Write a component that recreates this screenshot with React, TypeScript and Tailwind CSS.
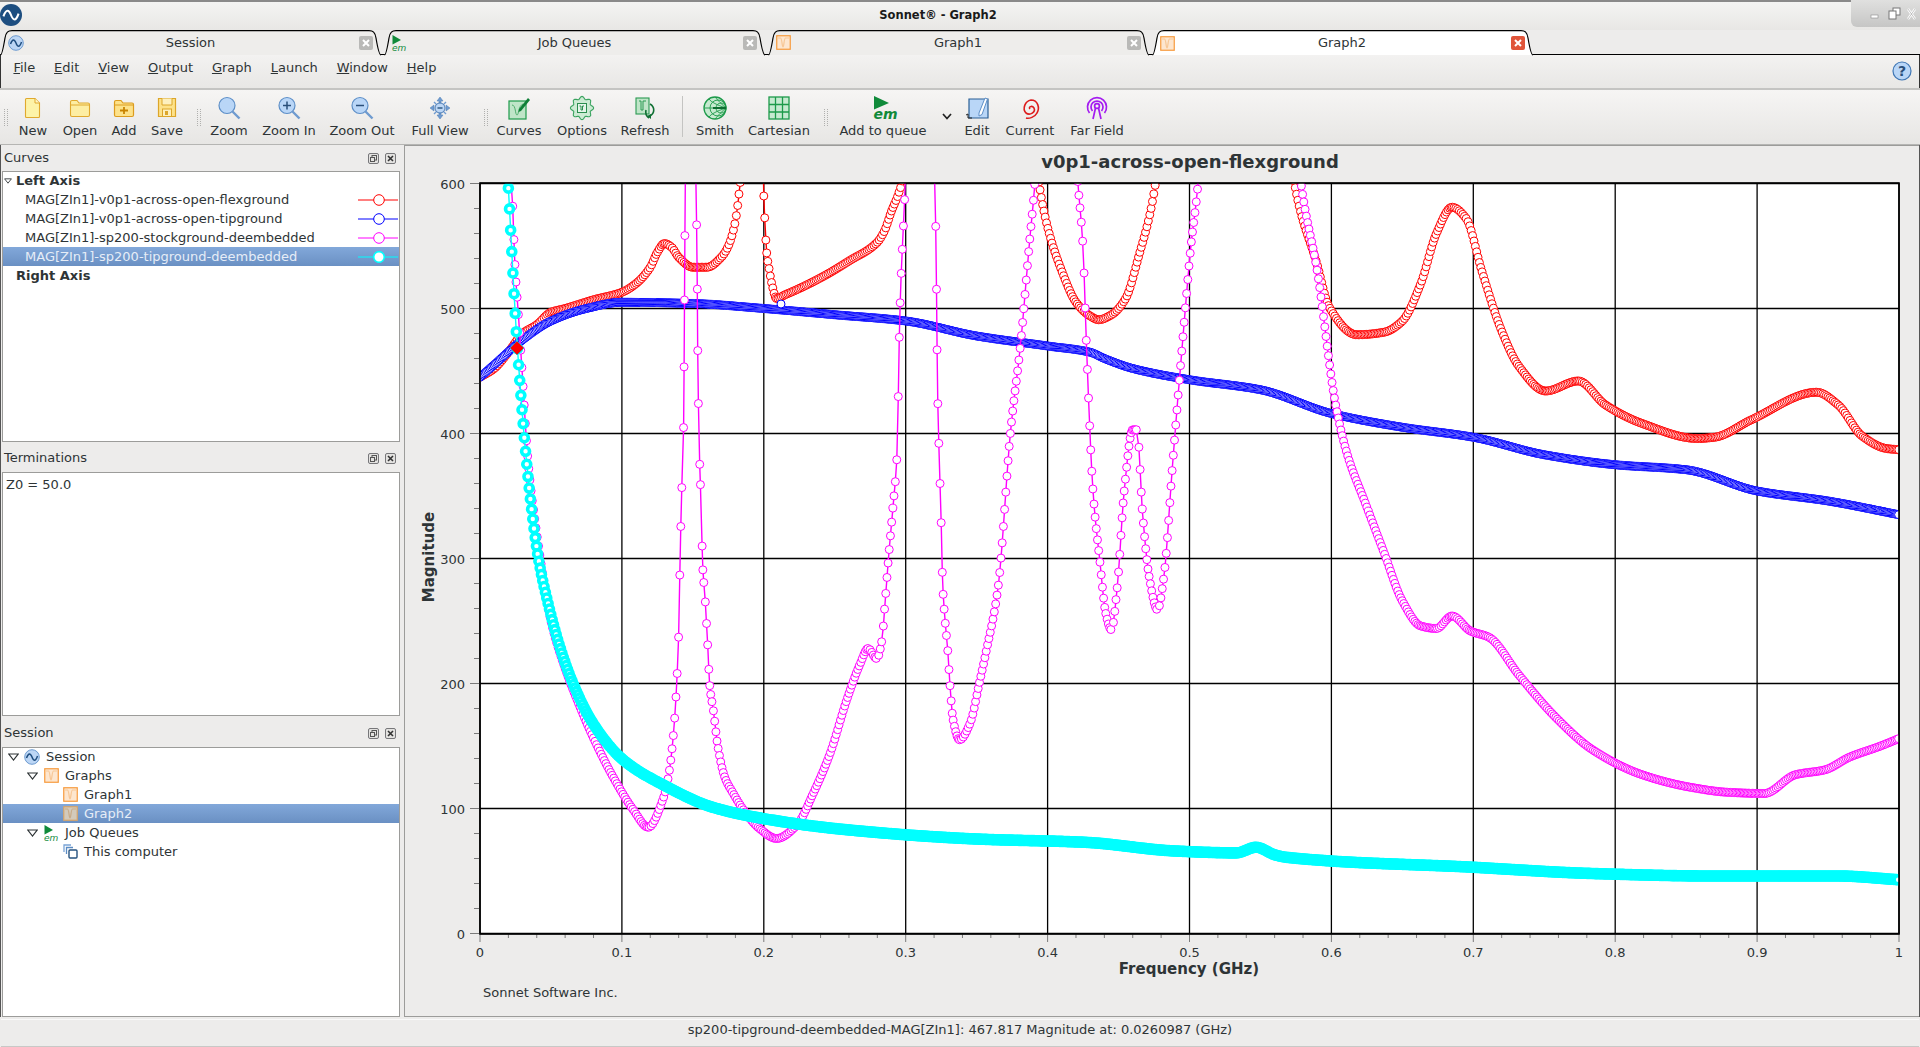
import React, { useMemo } from "react";

type P = [number, number];
const X = (f: number) => 480 + f * 1419;
const Y = (v: number) => 933.5 - v * 1.25;

function monotone(pts: P[], k0: number): P[] {
  const n = pts.length;
  const d: number[] = [];
  for (let i = 0; i < n - 1; i++) d.push((pts[i + 1][1] - pts[i][1]) / (pts[i + 1][0] - pts[i][0]));
  const m: number[] = [d[0]];
  for (let i = 1; i < n - 1; i++) {
    if (d[i - 1] * d[i] <= 0) m.push(0);
    else {
      const h0 = pts[i][0] - pts[i - 1][0];
      const h1 = pts[i + 1][0] - pts[i][0];
      const w1 = 2 * h1 + h0;
      const w2 = h1 + 2 * h0;
      m.push((w1 + w2) / (w1 / d[i - 1] + w2 / d[i]));
    }
  }
  m.push(d[n - 2]);
  const out: P[] = [];
  let k = 0;
  let last: P | null = null;
  let acc = 0;
  const fine = 0.00005;
  for (let f = pts[0][0]; f <= 1.00001; f += fine) {
    while (k < n - 2 && f > pts[k + 1][0]) k++;
    const h = pts[k + 1][0] - pts[k][0];
    const t = (f - pts[k][0]) / h;
    const t2 = t * t;
    const t3 = t2 * t;
    const v =
      (2 * t3 - 3 * t2 + 1) * pts[k][1] +
      (t3 - 2 * t2 + t) * h * m[k] +
      (-2 * t3 + 3 * t2) * pts[k + 1][1] +
      (t3 - t2) * h * m[k + 1];
    const p: P = [X(f), Y(v)];
    if (!last) {
      out.push(p);
      last = p;
      continue;
    }
    const dx = p[0] - last[0];
    const dy = p[1] - last[1];
    acc += Math.hypot(dx, dy);
    const s = Math.abs(dy / dx);
    const space = Math.min(60, k0 * (1.3 + 1.05 * s));
    last = p;
    if (acc >= space) {
      out.push(p);
      acc = 0;
    }
  }
  return out;
}

const RED: P[] = [[0,445],[.01,452],[.02,465],[.03,480],[.04,487],[.05,497],[.06,500],[.08,507],[.1,513],[.11,520],[.12,533],[.125,545],[.13,552],[.135,549],[.14,541],[.15,533],[.16,533],[.17,541],[.175,550],[.18,570],[.183,597],[.185,625],[.187,720],[.196,720],[.199,650],[.2,590],[.201,565],[.202,545],[.204,530],[.206,518],[.209,508],[.215,511],[.225,516],[.244,527],[.26,538],[.28,553],[.285,562],[.29,578],[.295,592],[.298,605],[.3,640],[.32,720],[.38,720],[.39,640],[.394,600],[.4,565],[.41,530],[.42,505],[.43,494],[.436,491],[.445,495],[.455,508],[.465,545],[.472,575],[.476,600],[.48,640],[.5,720],[.56,720],[.57,640],[.574,600],[.59,535],[.5985,501],[.618,479],[.637,481],[.65,490],[.663,520],[.674,560],[.685,581],[.695,572],[.706,530],[.72,482],[.732,454],[.751,434],[.774,442],[.793,423],[.819,408],[.858,396],[.87,397],[.896,411],[.942,433],[.957,423],[.974,398],[.991,388],[1,387]];
const BLUE: P[] = [[0,445],[.01,455],[.03,475],[.05,490],[.075,500],[.1,505],[.15,504],[.2,500],[.25,495],[.3,490],[.35,478],[.4,470],[.43,465],[.44,460],[.46,452],[.5,443],[.55,435],[.6,416],[.65,405],[.7,397],[.75,383],[.8,375],[.85,371],[.9,354],[.95,346],[1,335]];
const MAGENTA: P[] = [[.02,620],[.0225,594],[.0247,533],[.027,496],[.0296,451],[.034,376],[.04,320],[.05,250],[.06,212],[.0684,187],[.0797,157],[.0939,125],[.108,99],[.1186,85],[.1291,108],[.1327,125],[.1363,159],[.1386,200],[.1402,247],[.1409,293],[.1421,353],[.1433,393],[.1445,573],[.1455,700],[.148,760],[.1505,700],[.1522,600],[.153,535],[.1537,436],[.1545,398],[.155,368],[.1562,341],[.1567,300],[.1586,269],[.1604,232],[.162,197],[.1644,179],[.1677,149],[.1725,125],[.1785,112],[.1856,99],[.197,84],[.209,76],[.2235,87],[.2348,112],[.2467,144],[.2585,187],[.268,216],[.2735,228],[.2796,220],[.2833,235],[.2854,264],[.2875,295],[.291,341],[.2937,379],[.296,501],[.2997,600],[.302,680],[.31,740],[.318,680],[.32,620],[.3211,569],[.3218,505],[.3223,446],[.3242,360],[.3253,316],[.326,281],[.3277,251],[.3296,227],[.3312,199],[.3334,171],[.338,155],[.3453,168],[.3524,203],[.3566,225],[.365,276],[.374,403],[.381,472],[.387,550],[.391,600],[.395,680],[.405,740],[.417,680],[.4214,600],[.4249,550],[.4275,467],[.432,354],[.437,296],[.441,256],[.445,243],[.449,276],[.454,354],[.46,403],[.463,403],[.467,335],[.4715,286],[.4775,259],[.482,286],[.488,374],[.495,472],[.501,550],[.506,600],[.51,680],[.54,740],[.572,680],[.5786,600],[.59,530],[.603,423],[.611,384],[.624,344],[.637,305],[.65,266],[.663,246],[.674,244],[.685,254],[.698,242],[.711,237],[.732,207],[.758,173],[.784,147],[.819,127],[.853,117],[.879,113],[.905,112],[.927,127],[.948,131],[.965,141],[.987,150],[1,156]];
const CYAN: P[] = [[.016,680],[.0204,588],[.0258,478],[.0329,376],[.0364,339],[.041,301],[.048,264],[.0564,229],[.0656,200],[.0797,168],[.1008,139],[.129,119],[.164,101],[.1994,92],[.2586,83],[.352,75.5],[.426,73],[.49,66],[.533,64.5],[.547,69],[.56,63],[.568,61],[.7,53],[.784,48],[.87,46],[.957,46],[1,43]];

function Curve({ data, color, r = 4, sw = 1, k = 1 }: { data: P[]; color: string; r?: number; sw?: number; k?: number }) {
  const pts = useMemo(() => monotone(data, k), [data, k]);
  const visible = pts.filter((p) => p[1] > 170);
  return (
    <g>
      <polyline points={pts.map((p) => `${p[0].toFixed(1)},${p[1].toFixed(1)}`).join(" ")} fill="none" stroke={color} strokeWidth={1.4} />
      {visible.map((p, i) => (
        <circle key={i} cx={p[0]} cy={p[1]} r={r} fill="#fff" stroke={color} strokeWidth={sw} />
      ))}
    </g>
  );
}

function Chart() {
  const yMajor = [0, 100, 200, 300, 400, 500, 600];
  const xMajor = [0, 0.1, 0.2, 0.3, 0.4, 0.5, 0.6, 0.7, 0.8, 0.9, 1];
  const yTicks = Array.from({ length: 31 }, (_, i) => i * 20);
  const xTicks = Array.from({ length: 51 }, (_, i) => i * 0.02);
  const txt = { fontFamily: "'DejaVu Sans',sans-serif", fill: "#2e3436" };
  return (
    <svg viewBox="405 146 1514 870" className="block w-[1514px] h-[870px]">
      <text x="1190" y="168" textAnchor="middle" fontSize="18" fontWeight="700" style={txt}>v0p1-across-open-flexground</text>
      <rect x="480" y="183" width="1419" height="751" fill="#fff" />
      <clipPath id="plot"><rect x="480" y="183" width="1419" height="751" /></clipPath>
      <g stroke="#000" strokeWidth="1.3">
        {yMajor.map((v) => <line key={v} x1="480" x2="1899" y1={Y(v)} y2={Y(v)} />)}
        {xMajor.map((f) => <line key={f} x1={X(f)} x2={X(f)} y1="183" y2="934" />)}
      </g>
      <g stroke="#7a7a7a" strokeWidth="1">
        {yTicks.map((v) => <line key={v} x1={v % 100 === 0 ? 470 : 474} x2="480" y1={Y(v)} y2={Y(v)} />)}
        {xTicks.map((f, i) => <line key={i} x1={X(f)} x2={X(f)} y1="934" y2={i % 5 === 0 ? 942 : 938} />)}
      </g>
      <g clipPath="url(#plot)">
        <Curve data={RED} color="#ff0000" />
        <Curve data={BLUE} color="#0000ff" k={0.75} />
        <circle cx="781" cy="304" r="4" fill="#fff" stroke="#0000ff" />
        <Curve data={MAGENTA} color="#ff00ff" />
        <Curve data={CYAN} color="#00ffff" r={4} sw={3.6} />
        <path d="M517 341 L524 348 L517 355 L510 348 Z" fill="#ff0000" stroke="#00cccc" strokeWidth="0.6" />
      </g>
      <rect x="480" y="183" width="1419" height="751" fill="none" stroke="#000" strokeWidth="1.6" />
      {yMajor.map((v) => <text key={v} x="465" y={Y(v) + 5} textAnchor="end" fontSize="13" style={txt}>{v}</text>)}
      {xMajor.map((f) => <text key={f} x={X(f)} y="957" textAnchor="middle" fontSize="13" style={txt}>{f}</text>)}
      <text x="1189" y="974" textAnchor="middle" fontSize="15" fontWeight="700" style={txt}>Frequency (GHz)</text>
      <text transform="translate(434 557) rotate(-90)" textAnchor="middle" fontSize="15" fontWeight="700" style={txt}>Magnitude</text>
      <text x="483" y="997" fontSize="13" style={txt}>Sonnet Software Inc.</text>
    </svg>
  );
}

const Sine = ({ color }: { color: string }) => (
  <path d="M2.5 9 C4.5 3.5 6.5 4 8 8 C9.5 12 11.5 13 13.5 7" fill="none" stroke={color} strokeWidth="1.5" />
);
const SessionIcon = () => (
  <svg width="16" height="16" viewBox="0 0 16 16" className="shrink-0">
    <circle cx="8" cy="8" r="7.3" fill="#bcd6f5" stroke="#6d9bd0" />
    <Sine color="#1f4e80" />
  </svg>
);
const GraphIcon = ({ dim }: { dim?: boolean }) => (
  <svg width="15" height="15" viewBox="0 0 15 15" className="shrink-0">
    <rect x="0.75" y="0.75" width="13.5" height="13.5" fill={dim ? "#d3cabb" : "#fde6cf"} stroke={dim ? "#d8a468" : "#f79b3c"} strokeWidth="1.2" />
    <path d="M2 3 H4.5 C6 3 6 12 7 12 C8 12 8 3 9.5 3 H13" fill="none" stroke={dim ? "#c9ab88" : "#f7c795"} strokeWidth="1.2" />
  </svg>
);
const EmIcon = () => (
  <svg width="16" height="16" viewBox="0 0 16 16" className="shrink-0">
    <path d="M0.5 0 L9 5 L0.5 9.5 Z" fill="#108a3a" />
    <text x="0" y="15.5" fontSize="9" fontStyle="italic" fill="#108a3a" style={{ fontFamily: "'DejaVu Sans',sans-serif" }}>em</text>
  </svg>
);
const Copies = () => (
  <svg width="15" height="15" viewBox="0 0 15 15" className="shrink-0">
    <path d="M1 8 V1 H8" fill="none" stroke="#7aa4d6" strokeWidth="1.3" />
    <path d="M3.5 10 V3.5 H10" fill="none" stroke="#5b8cc4" strokeWidth="1.3" />
    <rect x="6" y="6" width="8" height="8" rx="1" fill="#fff" stroke="#24527f" strokeWidth="1.4" />
  </svg>
);

const Ic = ({ children }: { children: React.ReactNode }) => (
  <svg width="24" height="24" viewBox="0 0 24 24" className="block overflow-visible">{children}</svg>
);
const Mag = ({ sign }: { sign?: "+" | "-" }) => (
  <Ic>
    <circle cx="10" cy="9.5" r="8" fill="#b9d6f7" stroke="#5e8fc7" strokeWidth="1.2" />
    <path d="M15.5 15.5 L22.5 22.5" stroke="#6f9bcf" strokeWidth="2.4" />
    {sign && <path d="M6 9.5 H14" stroke="#2a4f7a" strokeWidth="1.5" />}
    {sign === "+" && <path d="M10 5.5 V13.5" stroke="#2a4f7a" strokeWidth="1.5" />}
  </Ic>
);
const gear = Array.from({ length: 72 }, (_, i) => {
  const a = (i / 72) * Math.PI * 2;
  const r = 10.3 + 1.3 * Math.cos(a * 8);
  return `${(12 + r * Math.cos(a)).toFixed(1)},${(12 + r * Math.sin(a)).toFixed(1)}`;
}).join(" ");

const icons: Record<string, React.ReactNode> = {
  New: <Ic><path d="M5.5 2.5 H14 L18.5 7 V20.5 Q18.5 21.5 17.5 21.5 H5.5 Q4.5 21.5 4.5 20.5 V3.5 Q4.5 2.5 5.5 2.5 Z" fill="#fdf3a8" stroke="#e0a92e" strokeWidth="1.1" /><path d="M14 2.5 V7 H18.5" fill="#fff6c4" stroke="#e0a92e" /></Ic>,
  Open: <Ic><path d="M2.5 6 Q2.5 4.5 4 4.5 H9 L11 7 H20 Q21.5 7 21.5 8.5 V19 Q21.5 20.5 20 20.5 H4 Q2.5 20.5 2.5 19 Z" fill="#fdeea3" stroke="#e0a92e" strokeWidth="1.1" /><path d="M3 9 H21" stroke="#e0a92e" /></Ic>,
  Add: <Ic><path d="M2.5 6 Q2.5 4.5 4 4.5 H9 L11 7 H20 Q21.5 7 21.5 8.5 V19 Q21.5 20.5 20 20.5 H4 Q2.5 20.5 2.5 19 Z" fill="#fde28a" stroke="#dc9c1e" strokeWidth="1.2" /><path d="M3 9 H21" stroke="#dc9c1e" /><path d="M8 14.5 H16 M12 11 V18" stroke="#c98400" strokeWidth="1.8" /></Ic>,
  Save: <Ic><path d="M3.5 2.5 H20.5 V20.5 H3.5 Z" fill="#fde28a" stroke="#dca62a" strokeWidth="1.2" /><path d="M7 2.5 V9 H17 V2.5" fill="#fdf0bf" stroke="#dca62a" /><rect x="7.5" y="13" width="9" height="7.5" fill="#fdf0bf" stroke="#dca62a" /><rect x="10" y="15" width="3" height="4" fill="#dca62a" /></Ic>,
  Zoom: <Mag />,
  "Zoom In": <Mag sign="+" />,
  "Zoom Out": <Mag sign="-" />,
  "Full View": <Ic><path d="M12 1 L15 5 H13 V19 H15 L12 23 L9 19 H11 V5 H9 Z M2 12 L6 9 V15 Z M22 12 L18 9 V15 Z" fill="#6f9bd0" stroke="#4d7db5" strokeWidth="0.5" /><path d="M6 6 L18 18 M18 6 L6 18" stroke="#6f9bd0" strokeWidth="1.4" /><circle cx="12" cy="12" r="5" fill="#bcd6f5" stroke="#4d7db5" /><path d="M9.5 12 H14.5" stroke="#24527f" strokeWidth="1.4" /></Ic>,
  Curves: <Ic><rect x="2" y="5" width="17" height="18" fill="#bfe5c8" stroke="#1d9a4a" strokeWidth="1.2" /><path d="M5 9 C9 9 8 19 10 19 C12 19 11 10 16 8" fill="none" stroke="#4fae6c" /><path d="M12 13 L21 2 L23 4 L14 15 L11.5 16 Z" fill="#0f7f38" /></Ic>,
  Options: <Ic><polygon points={gear} fill="#cdebd4" stroke="#3aa35f" strokeWidth="1.1" /><rect x="7.5" y="7.5" width="9" height="9" fill="#e6f5ea" stroke="#2b8d4e" /><path d="M9.5 10 H11 V14 H12.5 V10 H14" fill="none" stroke="#2b8d4e" /></Ic>,
  Refresh: <Ic><rect x="3" y="2" width="13" height="16" fill="#bfe5c8" stroke="#2b9a52" strokeWidth="1.1" /><path d="M6 5 H8 V14 H10 V5 H13" fill="none" stroke="#2b9a52" /><path d="M17 8 C22 11 22 17 17 20 M13 14 C12 18 13 20 16 22" fill="none" stroke="#0e6f32" strokeWidth="1.6" /><path d="M14 20 L18 18 L18 23 Z" fill="#0e6f32" /></Ic>,
  Smith: <Ic><circle cx="12" cy="12" r="11" fill="#c6ead0" stroke="#1d9a4a" strokeWidth="1.3" /><path d="M1 12 H23 M23 12 A8 8 0 0 0 7 12 A8 8 0 0 0 23 12 M23 12 A5 5 0 0 0 13 12 A5 5 0 0 0 23 12 M23 12 C14 9 8 6 6 3 M23 12 C14 15 8 18 6 21 M23 12 C16 6 14 3 12 1 M23 12 C16 18 14 21 12 23" fill="none" stroke="#1d9a4a" strokeWidth="0.9" /><path d="M10 12 H23" stroke="#0e6f32" strokeWidth="2" /></Ic>,
  Cartesian: <Ic><rect x="2" y="1" width="20" height="22" fill="#c6ead0" stroke="#1d9a4a" strokeWidth="1.3" /><path d="M8.5 1 V23 M15.5 1 V23 M2 8.5 H22 M2 16 H22" stroke="#1d9a4a" strokeWidth="1.3" /></Ic>,
  "Add to queue": <Ic><path d="M3 0 L18 7 L3 13.5 Z" fill="#108a3a" /><text x="2.5" y="23" fontSize="14" fontWeight="700" fontStyle="italic" fill="#108a3a" style={{ fontFamily: "'DejaVu Sans',sans-serif" }}>em</text></Ic>,
  Edit: <Ic><path d="M4 3 H23 V22 H4 Z" fill="#b9d6f7" stroke="#2a5f96" strokeWidth="1.2" /><path d="M14 17 L20 2 L22.5 3 L17 18.5 L14 20 Z" fill="#fff" stroke="#5e8fc7" /><path d="M1 19 L3 18 V22 H7" fill="none" stroke="#222" /></Ic>,
  Current: <Ic><path d="M12 13 C10 11 14 9 16 12 C18 16 12 20 8 17 C4 13 7 5 13 4 C20 4 22 12 19 17 C17 21 11 23 8 22" fill="none" stroke="#dd1c1c" strokeWidth="1.6" /></Ic>,
  "Far Field": <Ic><g fill="none" stroke="#a41cf0" strokeWidth="1.7"><path d="M4.5 17 A9.5 9.5 0 1 1 19.5 17" /><path d="M7.5 15 A6 6 0 1 1 16.5 15" /><circle cx="12" cy="10" r="2.4" /><path d="M10.5 12 L8 23 M13.5 12 L16 23" /></g></Ic>,
};

function Tool({ label, w }: { label: string; w: string }) {
  return (
    <div className={`flex flex-col items-center shrink-0 pt-[6px] ${w}`}>
      {icons[label]}
      <span className="mt-[3px] leading-[16px] text-[13px] text-[#2e3436] whitespace-nowrap">{label}</span>
    </div>
  );
}
const Grip = ({ w }: { w: string }) => (
  <div className={`flex justify-center items-center h-full shrink-0 ${w}`}>
    <div className="w-[4px] h-[17px] mt-[1px] border-x border-dotted border-[#b0b0ae]" />
  </div>
);

function Tab({ label, icon, active }: { label: string; icon: React.ReactNode; active?: boolean }) {
  return (
    <div className={`relative w-[384px] shrink-0 flex items-center pl-[8px] pr-[11px] ${active ? "h-[26px]" : "h-[25px]"}`}>
      <svg className="absolute left-0 top-0 overflow-visible" width="384" height="25">
        <path d="M0.5 25 C2 25 4 14 5 8 C6 2 8 0.7 12 0.7 H369 C373 0.7 375 2 376 8 C377 14 379 25 381 25" fill={active ? "#fff" : "#eeedeb"} stroke="#000" strokeWidth="1.2" />
      </svg>
      <div className="relative flex items-center w-full">
        {icon}
        <span className="flex-1 text-center text-[13px] text-[#2e3436] pr-[2px]">{label}</span>
        <span className={`w-[14px] h-[14px] rounded-[2px] flex items-center justify-center ${active ? "bg-[#e0553a]" : "bg-[#b9b9b7]"}`}>
          <svg width="8" height="8" viewBox="0 0 8 8"><path d="M1 1 L7 7 M7 1 L1 7" stroke="#fff" strokeWidth="2" /></svg>
        </span>
      </div>
    </div>
  );
}

const DockTitle = ({ title, h }: { title: string; h: string }) => (
  <div className={`flex items-center justify-between pl-[3px] pr-[8px] text-[13px] text-[#2e3436] ${h}`}>
    <span>{title}</span>
    <span className="flex gap-[6px]">
      <svg width="11" height="11" viewBox="0 0 11 11"><rect x="0.5" y="0.5" width="10" height="10" rx="1.5" fill="#e3e2e0" stroke="#77777a" /><rect x="4" y="2.5" width="4.5" height="4.5" fill="none" stroke="#555" /><rect x="2.5" y="4.5" width="4" height="4" fill="#e3e2e0" stroke="#555" /></svg>
      <svg width="11" height="11" viewBox="0 0 11 11"><rect x="0.5" y="0.5" width="10" height="10" rx="1.5" fill="#e3e2e0" stroke="#77777a" /><path d="M3 3 L8 8 M8 3 L3 8" stroke="#333" strokeWidth="1.6" /></svg>
    </span>
  </div>
);
const Arrow = ({ small }: { small?: boolean }) => (
  <svg width={small ? 8 : 11} height={small ? 6 : 8} viewBox="0 0 11 8" className="shrink-0"><path d="M0.8 1 H10.2 L5.5 7 Z" fill="#fff" stroke="#2e3436" strokeWidth="1.2" /></svg>
);
const Legend = ({ color, filled }: { color: string; filled?: boolean }) => (
  <svg width="40" height="12" viewBox="0 0 40 12" className="shrink-0">
    <path d="M0 6 H40" stroke={color} strokeWidth="1" />
    <circle cx="21" cy="6" r="5.3" fill="#fff" stroke={color} strokeWidth={filled ? 1.6 : 1} />
  </svg>
);
const Row = ({ children, sel }: { children: React.ReactNode; sel?: boolean }) => (
  <div className={`flex items-center h-[19px] text-[13px] whitespace-nowrap ${sel ? "bg-gradient-to-b from-[#82a8da] to-[#6a90c3] text-[#e6edf7]" : "text-[#2e3436]"}`}>{children}</div>
);
const Box = ({ children, h }: { children: React.ReactNode; h: string }) => (
  <div className={`ml-[1px] w-[398px] bg-white border border-[#9c9c9a] overflow-hidden ${h}`}>{children}</div>
);

const menus = ["File", "Edit", "View", "Output", "Graph", "Launch", "Window", "Help"];

export default function App() {
  return (
    <div className="w-[1920px] h-[1047px] overflow-hidden flex flex-col bg-[#edeceb] font-[family-name:DejaVu_Sans,sans-serif]">
      <div className="relative h-[30px] shrink-0 border-t-2 border-[#8a8a8a] bg-gradient-to-b from-[#f4f4f3] to-[#e8e7e5] flex items-center justify-center pr-[44px]">
        <svg width="22" height="22" viewBox="0 0 16 16" className="absolute left-0 top-[2px]">
          <circle cx="8" cy="8" r="8" fill="#1d4e80" />
          <Sine color="#fff" />
        </svg>
        <span className="text-[11.5px] font-bold text-[#1a1a1a]">Sonnet® - Graph2</span>
        <div className="absolute right-0 top-[-2px] w-[69px] h-[27px] rounded-bl-[6px] bg-gradient-to-b from-[#e0e0df] to-[#c6c6c5] flex items-center justify-end gap-[6px] pr-[3px]">
          <svg width="56" height="16" viewBox="0 0 56 16">
            <rect x="10" y="9" width="7" height="3" fill="#fff" stroke="#8a8a8a" strokeWidth="0.6" />
            <rect x="32" y="2" width="7" height="7" fill="#fff" stroke="#777" />
            <rect x="28" y="5" width="7" height="8" fill="#fff" stroke="#777" />
            <path d="M47 3 L54 13 M54 3 L47 13" stroke="#fff" strokeWidth="2.4" />
            <path d="M47 3 L54 13 M54 3 L47 13" stroke="#8a8a8a" strokeWidth="0.5" />
          </svg>
        </div>
      </div>
      <div className="h-[25px] shrink-0 flex border-b border-black bg-[#edeceb] relative z-10">
        <Tab label="Session" icon={<SessionIcon />} />
        <Tab label="Job Queues" icon={<EmIcon />} />
        <Tab label="Graph1" icon={<GraphIcon />} />
        <Tab label="Graph2" icon={<GraphIcon />} active />
      </div>
      <div className="h-[33px] shrink-0 flex items-center justify-between pl-[3px] pr-[6px] pb-[7px] border-l border-r border-[#333] bg-gradient-to-b from-[#f3f2f1] to-[#e8e7e5] text-[13px] text-[#2e3436]">
        <div className="flex">
          {menus.map((m) => (
            <span key={m} className="px-[9.45px]"><span className="underline">{m[0]}</span>{m.slice(1)}</span>
          ))}
        </div>
        <svg width="20" height="20" viewBox="0 0 20 20" className="mt-[6px] mr-[1px]">
          <circle cx="10" cy="10" r="9" fill="#b9d6f7" stroke="#3f76b4" strokeWidth="1.2" />
          <text x="10" y="15" textAnchor="middle" fontSize="14" fontWeight="700" fill="#2a4f7a" style={{ fontFamily: "'DejaVu Sans',sans-serif" }}>?</text>
        </svg>
      </div>
      <div className="h-[57px] shrink-0 flex border-t-2 border-[#c4c4c2] border-b border-b-[#b5b5b3] bg-gradient-to-b from-[#f6f5f4] to-[#e7e6e4]">
        <Grip w="w-[12px]" />
        <Tool label="New" w="w-[42px]" />
        <Tool label="Open" w="w-[52px]" />
        <Tool label="Add" w="w-[36px]" />
        <Tool label="Save" w="w-[50px]" />
        <Grip w="w-[14px]" />
        <Tool label="Zoom" w="w-[46px]" />
        <Tool label="Zoom In" w="w-[74px]" />
        <Tool label="Zoom Out" w="w-[72px]" />
        <Tool label="Full View" w="w-[84px]" />
        <Grip w="w-[8px]" />
        <Tool label="Curves" w="w-[58px]" />
        <Tool label="Options" w="w-[68px]" />
        <Tool label="Refresh" w="w-[58px]" />
        <div className="w-[16px] shrink-0 flex justify-center pt-[6px]"><div className="w-px h-[41px] bg-[#c4c4c2]" /></div>
        <Tool label="Smith" w="w-[50px]" />
        <Tool label="Cartesian" w="w-[78px]" />
        <Grip w="w-[15px]" />
        <Tool label="Add to queue" w="w-[100px]" />
        <div className="w-[27px] shrink-0 flex justify-center pt-[23px]">
          <svg width="10" height="7" viewBox="0 0 10 7"><path d="M1 1 L5 5.5 L9 1" fill="none" stroke="#222" strokeWidth="1.7" /></svg>
        </div>
        <Tool label="Edit" w="w-[34px]" />
        <Tool label="Current" w="w-[72px]" />
        <Tool label="Far Field" w="w-[62px]" />
      </div>
      <div className="h-[872px] shrink-0 flex border-l border-r border-[#555]">
        <div className="w-[403px] shrink-0 flex flex-col">
          <DockTitle title="Curves" h="h-[26px]" />
          <Box h="h-[271px]">
            <div className="mt-[-1px]">
              <Row><span className="pl-[1px]"><Arrow small /></span><span className="ml-[4px] font-bold">Left Axis</span></Row>
              {[["MAG[ZIn1]-v0p1-across-open-flexground", "#ff0000"], ["MAG[ZIn1]-v0p1-across-open-tipground", "#0000ff"], ["MAG[ZIn1]-sp200-stockground-deembedded", "#ff00ff"], ["MAG[ZIn1]-sp200-tipground-deembedded", "#00ffff"]].map(([t, c], i) => (
                <Row key={t} sel={i === 3}>
                  <span className="pl-[22px] flex-1">{t}</span>
                  <span className="pr-[1px]"><Legend color={c} filled={i === 3} /></span>
                </Row>
              ))}
              <Row><span className="pl-[13px] font-bold">Right Axis</span></Row>
            </div>
          </Box>
          <DockTitle title="Terminations" h="h-[30px] pt-[2px]" />
          <Box h="h-[244px]">
            <div className="pl-[3px] pt-[2px] text-[13px] text-[#2e3436]">Z0 = 50.0</div>
          </Box>
          <DockTitle title="Session" h="h-[31px] pt-[3px]" />
          <Box h="h-[270px]">
            <div className="mt-[-1px]">
              <Row><span className="pl-[5px] pr-[5px]"><Arrow /></span><SessionIcon /><span className="ml-[6px]">Session</span></Row>
              <Row><span className="pl-[24px] pr-[6px]"><Arrow /></span><GraphIcon /><span className="ml-[6px]">Graphs</span></Row>
              <Row><span className="pl-[60px]"><GraphIcon /></span><span className="ml-[6px]">Graph1</span></Row>
              <Row sel><span className="pl-[60px]"><GraphIcon dim /></span><span className="ml-[6px]">Graph2</span></Row>
              <Row><span className="pl-[24px] pr-[6px]"><Arrow /></span><EmIcon /><span className="ml-[5px]">Job Queues</span></Row>
              <Row><span className="pl-[60px]"><Copies /></span><span className="ml-[6px]">This computer</span></Row>
            </div>
          </Box>
        </div>
        <div className="flex-1 h-[872px] border-l border-t border-b border-[#9c9c9a]">
          <Chart />
        </div>
      </div>
      <div className="flex-1 mx-[1px] mt-[2px] pb-[6px] border-t border-t-[#fafafa] border-b-2 border-b-[#c8c8c6] flex items-center justify-center text-[13px] text-[#2e3436]">
        sp200-tipground-deembedded-MAG[ZIn1]: 467.817 Magnitude at: 0.0260987 (GHz)
      </div>
    </div>
  );
}
